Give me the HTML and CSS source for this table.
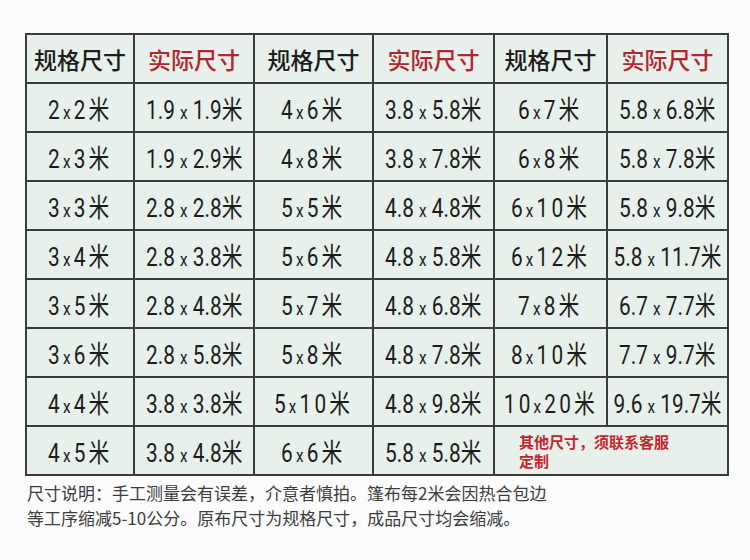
FILE: index.html
```html
<!DOCTYPE html>
<html lang="zh">
<head>
<meta charset="utf-8">
<title>尺寸表</title>
<link rel="stylesheet" href="styles.css">
</head>
<body>
<div class="page">
<table class="sizes">
<colgroup>
<col class="c1"><col class="c2"><col class="c3"><col class="c4"><col class="c5"><col class="c6">
</colgroup>
<tr class="head">
<th>规格尺寸</th><th class="red">实际尺寸</th><th>规格尺寸</th><th class="red">实际尺寸</th><th>规格尺寸</th><th class="red">实际尺寸</th>
</tr>
<tr>
<td class="spec"><span class="n">2<span class="x">x</span>2米</span></td><td><span class="n">1.9 <span class="x">x</span> 1.9米</span></td>
<td class="spec"><span class="n">4<span class="x">x</span>6米</span></td><td><span class="n">3.8 <span class="x">x</span> 5.8米</span></td>
<td class="spec"><span class="n">6<span class="x">x</span>7米</span></td><td><span class="n">5.8 <span class="x">x</span> 6.8米</span></td>
</tr>
<tr>
<td class="spec"><span class="n">2<span class="x">x</span>3米</span></td><td><span class="n">1.9 <span class="x">x</span> 2.9米</span></td>
<td class="spec"><span class="n">4<span class="x">x</span>8米</span></td><td><span class="n">3.8 <span class="x">x</span> 7.8米</span></td>
<td class="spec"><span class="n">6<span class="x">x</span>8米</span></td><td><span class="n">5.8 <span class="x">x</span> 7.8米</span></td>
</tr>
<tr>
<td class="spec"><span class="n">3<span class="x">x</span>3米</span></td><td><span class="n">2.8 <span class="x">x</span> 2.8米</span></td>
<td class="spec"><span class="n">5<span class="x">x</span>5米</span></td><td><span class="n">4.8 <span class="x">x</span> 4.8米</span></td>
<td class="spec"><span class="n">6<span class="x">x</span>10米</span></td><td><span class="n">5.8 <span class="x">x</span> 9.8米</span></td>
</tr>
<tr>
<td class="spec"><span class="n">3<span class="x">x</span>4米</span></td><td><span class="n">2.8 <span class="x">x</span> 3.8米</span></td>
<td class="spec"><span class="n">5<span class="x">x</span>6米</span></td><td><span class="n">4.8 <span class="x">x</span> 5.8米</span></td>
<td class="spec"><span class="n">6<span class="x">x</span>12米</span></td><td><span class="n">5.8 <span class="x">x</span> 11.7米</span></td>
</tr>
<tr>
<td class="spec"><span class="n">3<span class="x">x</span>5米</span></td><td><span class="n">2.8 <span class="x">x</span> 4.8米</span></td>
<td class="spec"><span class="n">5<span class="x">x</span>7米</span></td><td><span class="n">4.8 <span class="x">x</span> 6.8米</span></td>
<td class="spec"><span class="n">7<span class="x">x</span>8米</span></td><td><span class="n">6.7 <span class="x">x</span> 7.7米</span></td>
</tr>
<tr>
<td class="spec"><span class="n">3<span class="x">x</span>6米</span></td><td><span class="n">2.8 <span class="x">x</span> 5.8米</span></td>
<td class="spec"><span class="n">5<span class="x">x</span>8米</span></td><td><span class="n">4.8 <span class="x">x</span> 7.8米</span></td>
<td class="spec"><span class="n">8<span class="x">x</span>10米</span></td><td><span class="n">7.7 <span class="x">x</span> 9.7米</span></td>
</tr>
<tr>
<td class="spec"><span class="n">4<span class="x">x</span>4米</span></td><td><span class="n">3.8 <span class="x">x</span> 3.8米</span></td>
<td class="spec"><span class="n">5<span class="x">x</span>10米</span></td><td><span class="n">4.8 <span class="x">x</span> 9.8米</span></td>
<td class="spec"><span class="n">10<span class="x">x</span>20米</span></td><td><span class="n">9.6 <span class="x">x</span> 19.7米</span></td>
</tr>
<tr>
<td class="spec"><span class="n">4<span class="x">x</span>5米</span></td><td><span class="n">3.8 <span class="x">x</span> 4.8米</span></td>
<td class="spec"><span class="n">6<span class="x">x</span>6米</span></td><td><span class="n">5.8 <span class="x">x</span> 5.8米</span></td>
<td colspan="2" class="note">其他尺寸，须联系客服<br>定制</td>
</tr>
</table>
<p class="desc">尺寸说明：手工测量会有误差，介意者慎拍。篷布每2米会因热合包边<br>等工序缩减5-10公分。原布尺寸为规格尺寸，成品尺寸均会缩减。</p>
</div>
</body>
</html>
```
FILE: styles.css
```css
html, body {
  margin: 0;
  padding: 0;
  background: #fcfcfd;
}
.page {
  width: 750px;
  height: 560px;
  padding: 33px 0 0 25px;
  box-sizing: border-box;
  font-family: "Roboto", "Noto Sans CJK SC", sans-serif;
}
.sizes {
  border-collapse: collapse;
  table-layout: fixed;
  width: 702px;
  background: #e7f0ea;
}
.c1 { width: 108px; }
.c2 { width: 120px; }
.c3 { width: 119px; }
.c4 { width: 121px; }
.c5 { width: 113px; }
.c6 { width: 121px; }
.sizes th, .sizes td {
  border: 2px solid #3b3d3b;
  height: 47px;
  padding: 0;
  text-align: center;
  vertical-align: middle;
  white-space: nowrap;
  color: #1c1c1c;
}
.sizes th {
  font-family: "Noto Sans CJK SC", sans-serif;
  font-size: 23px;
  font-weight: 500;
  letter-spacing: 0;
}
.sizes th.red {
  color: #b3262c;
}
.n {
  display: inline-block;
  margin: 0 -16px;
  font-size: 26px;
  transform: scaleX(0.8);
  font-weight: 400;
}
.spec .n {
  letter-spacing: 4px;
}
.x {
  font-size: 19px;
}
.sizes td.note {
  text-align: left;
  padding-left: 24px;
  font-family: "Noto Sans CJK SC", sans-serif;
  font-size: 15px;
  font-weight: 700;
  line-height: 19px;
  color: #c8242c;
}
.desc {
  margin: 4px 0 0 2px;
  font-family: "Noto Sans CJK SC", sans-serif;
  font-size: 17px;
  line-height: 25px;
  color: #3d3d3d;
}
```
